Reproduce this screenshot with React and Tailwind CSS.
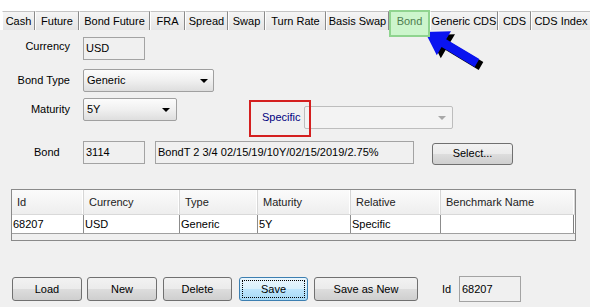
import React from "react";

const tabs = [
  { label: "Cash", w: "w-[33px]" },
  { label: "Future", w: "w-[44px]" },
  { label: "Bond Future", w: "w-[71px]" },
  { label: "FRA", w: "w-[35px]" },
  { label: "Spread", w: "w-[43px]" },
  { label: "Swap", w: "w-[37px]" },
  { label: "Turn Rate", w: "w-[61px]" },
  { label: "Basis Swap", w: "w-[63px]" },
  { label: "Bond", w: "w-[41px]", selected: true },
  { label: "Generic CDS", w: "w-[68px]" },
  { label: "CDS", w: "w-[33px]" },
  { label: "CDS Index", w: "w-[60px]" },
];

function Tab({ label, w, selected }) {
  if (selected) {
    return (
      <div
        className={`${w} relative z-10 -mt-[1px] h-[27px] shrink-0 flex justify-center pt-[2px] bg-[#ccf5cc] border-2 border-[#8fd48f] text-[#4f7d4f] leading-[14px]`}
      >
        {label}
      </div>
    );
  }
  return (
    <div
      className={`${w} h-[19px] shrink-0 flex items-center justify-center bg-gradient-to-b from-[#f5f5f5] to-[#e5e5e5] border-t border-l border-r border-t-[#c4c4c4] border-l-white border-r-[#8a8a8a] whitespace-nowrap overflow-hidden`}
    >
      {label}
    </div>
  );
}

function Field({ w, children, h = "h-[23px]" }) {
  return (
    <div
      className={`${w} ${h} shrink-0 border border-[#a3a3a3] bg-[#f0f0f0] pl-[2px] flex items-center whitespace-nowrap overflow-hidden`}
    >
      {children}
    </div>
  );
}

function Combo({ w, value, arrowPad }) {
  return (
    <div
      className={`${w} h-[23px] shrink-0 rounded-[2px] border border-[#a0a0a0] bg-gradient-to-b from-[#fcfcfc] via-[#f0f0f0] to-[#dedede] flex items-center justify-between pl-[3px] ${arrowPad}`}
    >
      <span>{value}</span>
      <span className="w-0 h-0 border-l-[4px] border-r-[4px] border-t-[4px] border-l-transparent border-r-transparent border-t-black" />
    </div>
  );
}

function Button({ w, h = "h-[24px]", children, primary }) {
  if (primary) {
    return (
      <div
        className={`${w} ${h} shrink-0 rounded-[3px] border border-[#3c7fb1] bg-[linear-gradient(to_bottom,#eaf6fd_0%,#d9f0fc_50%,#bee6fd_50%,#a7d9f5_100%)] p-[2px]`}
      >
        <div className="w-full h-full border border-dotted border-black flex items-center justify-center">
          {children}
        </div>
      </div>
    );
  }
  return (
    <div
      className={`${w} ${h} shrink-0 rounded-[3px] border border-[#707070] bg-[linear-gradient(to_bottom,#f2f2f2_0%,#ebebeb_50%,#dddddd_50%,#cfcfcf_100%)] flex items-center justify-center`}
    >
      {children}
    </div>
  );
}

const cols = ["Id", "Currency", "Type", "Maturity", "Relative", "Benchmark Name"];
const row = ["68207", "USD", "Generic", "5Y", "Specific", ""];

export default function App() {
  return (
    <div className="relative w-[590px] h-[307px] overflow-hidden bg-[#f0f0f0] text-[11px] leading-[13px] text-black font-['Liberation_Sans',Arial,sans-serif]">
      {/* Tab strip */}
      <div className="h-[30px] bg-white pt-[11px] pl-[2px] flex items-start">
        {tabs.map((t) => (
          <Tab key={t.label} {...t} />
        ))}
      </div>

      {/* Panel */}
      <div className="pt-[7px]">
        {/* Currency */}
        <div className="flex items-center h-[23px]">
          <div className="w-[83px] pr-[13px] text-right -mt-[4px]">Currency</div>
          <Field w="w-[62px]">USD</Field>
        </div>

        {/* Bond Type */}
        <div className="flex items-center h-[23px] mt-[9px]">
          <div className="w-[83px] pr-[13px] text-right">Bond Type</div>
          <Combo w="w-[131px]" value="Generic" arrowPad="pr-[5px]" />
        </div>

        {/* Maturity + Specific */}
        <div className="flex items-start mt-[6px]">
          <div className="flex items-center h-[23px]">
            <div className="w-[83px] pr-[13px] text-right">Maturity</div>
            <Combo w="w-[94px]" value="5Y" arrowPad="pr-[6px]" />
          </div>
          <div className="relative ml-[85px] mt-[8px] flex items-center h-[23px]">
            <div className="w-[42px] text-[#000080]">Specific</div>
            <div className="w-[149px] h-[23px] rounded-[2px] border border-[#bdbdbd] bg-[#f3f3f3] flex items-center justify-end pr-[6px]">
              <span className="w-0 h-0 border-l-[4px] border-r-[4px] border-t-[4px] border-l-transparent border-r-transparent border-t-[#a8a8a8]" />
            </div>
            <div className="absolute left-[-13px] top-[-6px] w-[62px] h-[37px] border-2 border-[#d41f1f] pointer-events-none" />
          </div>
        </div>

        {/* Bond */}
        <div className="flex items-center h-[23px] mt-[12px]">
          <div className="w-[83px] pl-[34px]">Bond</div>
          <Field w="w-[62px]">3114</Field>
          <div className="ml-[10px]">
            <Field w="w-[259px]">BondT 2 3/4 02/15/19/10Y/02/15/2019/2.75%</Field>
          </div>
          <div className="ml-[18px] mt-[2px]">
            <Button w="w-[81px]" h="h-[22px]">Select...</Button>
          </div>
        </div>

        {/* Table */}
        <div className="mt-[25px] ml-[11px] w-[565px] border border-[#8a8a8a] bg-[#f0f0f0]">
          <div className="grid grid-cols-[72px_96px_78px_93px_90px_134px] h-[25px] bg-gradient-to-b from-[#fbfbfb] to-[#eeeeee] border-b border-[#d9d9d9]">
            {cols.map((c) => (
              <div
                key={c}
                className="pl-[5px] flex items-center text-[#222] border-r border-[#d6d6d6] shadow-[inset_-1px_0_0_#ffffff]"
              >
                {c}
              </div>
            ))}
          </div>
          <div className="grid grid-cols-[72px_96px_78px_93px_90px_134px] h-[19px] bg-white border-b border-[#a0a0a0]">
            {row.map((c, i) => (
              <div
                key={i}
                className={`pl-[1px] flex items-center border-r ${i === 5 ? "border-[#808080] mr-[1px]" : "border-[#8c8c8c]"}`}
              >
                {c}
              </div>
            ))}
          </div>
          <div className="h-[6px]" />
        </div>

        {/* Buttons */}
        <div className="flex items-center h-[26px] mt-[35px] ml-[12px]">
          <Button w="w-[70px]">Load</Button>
          <div className="ml-[5px]">
            <Button w="w-[70px]">New</Button>
          </div>
          <div className="ml-[6px]">
            <Button w="w-[69px]">Delete</Button>
          </div>
          <div className="ml-[7px]">
            <Button w="w-[69px]" primary>
              Save
            </Button>
          </div>
          <div className="ml-[6px]">
            <Button w="w-[104px]">Save as New</Button>
          </div>
          <div className="ml-[24px] w-[17px]">Id</div>
          <Field w="w-[62px]" h="h-[26px]">
            68207
          </Field>
        </div>
      </div>

      {/* Annotation arrow */}
      <svg
        className="absolute left-[415px] top-[25px] pointer-events-none"
        width="75"
        height="50"
        viewBox="415 25 75 50"
      >
        <polygon
          transform="translate(4 3)"
          fill="#000"
          points="425,32 451,31.2 446.2,39.3 479.3,59.1 474.7,66.9 441.6,47.1 436.8,55.2"
        />
        <polygon
          fill="#0a14f0"
          points="425,32 451,31.2 446.2,39.3 479.3,59.1 474.7,66.9 441.6,47.1 436.8,55.2"
        />
      </svg>
    </div>
  );
}
